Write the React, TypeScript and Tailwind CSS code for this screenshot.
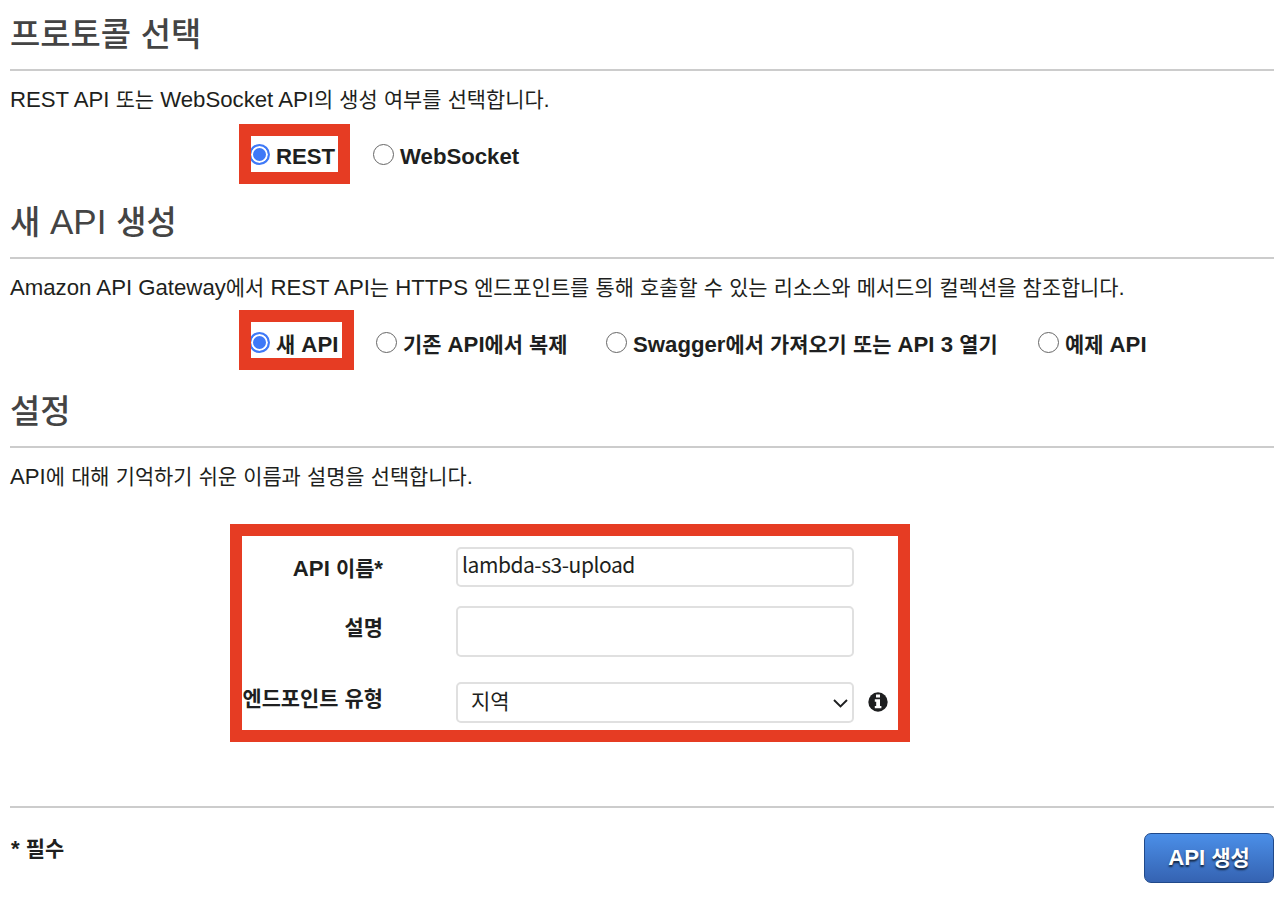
import type { ReactNode } from "react";

const HANGUL = /([가-힣]+)/;

export default function App() {
  return (
    <main className="relative h-[897px] w-[1280px] overflow-hidden bg-white pr-[6px] pl-[10px] font-['Liberation_Sans','Noto_Sans_CJK_KR',sans-serif] text-[22.2px] text-[#1e1f20]">
      <Section title="프로토콜 선택" description="REST API 또는 WebSocket API의 생성 여부를 선택합니다." height="h-[188px]">
        <div className="flex h-[58px] items-center pl-[239px]">
          <RadioOption name="protocol" label="REST" width="w-[124px]" checked />
          <RadioOption name="protocol" label="WebSocket" width="w-[150px]" />
        </div>
      </Section>

      <Section
        title="새 API 생성"
        description="Amazon API Gateway에서 REST API는 HTTPS 엔드포인트를 통해 호출할 수 있는 리소스와 메서드의 컬렉션을 참조합니다."
        height="h-[189px]"
      >
        <div className="flex h-[58px] items-center pl-[239px]">
          <RadioOption name="source" label="새 API" width="w-[127px]" checked />
          <RadioOption name="source" label="기존 API에서 복제" width="w-[230px]" />
          <RadioOption name="source" label="Swagger에서 가져오기 또는 API 3 열기" width="w-[432px]" />
          <RadioOption name="source" label="예제 API" width="w-[120px]" />
        </div>
      </Section>

      <Section title="설정" description="API에 대해 기억하기 쉬운 이름과 설명을 선택합니다." height="h-[429px]">
        <div className="flex flex-col pt-[42px]">
          <Field label="API 이름*" height="h-[59px]">
            <input
              defaultValue="lambda-s3-upload"
              className="h-10 w-[398px] rounded-[5px] border-2 border-[#e0e0e0] px-[4px] pb-[6px] font-['Noto_Sans_CJK_KR',sans-serif] text-[21px] tracking-[-0.45px] outline-none"
            />
          </Field>
          <Field label="설명" height="h-[76px]">
            <textarea className="h-[51px] w-[398px] resize-none rounded-[5px] border-2 border-[#e0e0e0] outline-none" />
          </Field>
          <Field label="엔드포인트 유형" height="h-[42px]" labelOffset="pt-0">
            <div className="relative h-[42px] w-[398px]">
              <select className="h-[41px] w-full appearance-none rounded-[5px] border-2 border-[#e0e0e0] bg-white px-[13px] pb-[3px] font-['Noto_Sans_CJK_KR',sans-serif] text-[21px] outline-none">
                <option>지역</option>
              </select>
              <svg className="pointer-events-none absolute top-[17px] right-[6px] h-[9px] w-[15px]" viewBox="0 0 15 9" fill="none">
                <path d="M1 1 7.5 7.4 14 1" stroke="currentColor" strokeWidth="1.9" />
              </svg>
            </div>
            <InfoIcon />
          </Field>
        </div>
      </Section>

      <footer className="flex justify-between border-t-2 border-[#cccccc] pt-[25px]">
        <span className="-mt-px pl-px font-bold">
          <Label>* 필수</Label>
        </span>
        <button className="h-[50px] w-[130px] rounded-[7px] border border-[#20498a] bg-linear-to-b from-[#4b8fe8] to-[#3563b2] font-bold text-white [text-shadow:0_2px_2px_rgba(0,0,0,0.7)]">
          <Label>API 생성</Label>
        </button>
      </footer>

      <Highlight className="top-[124px] left-[239px] h-[60px] w-[111px]" />
      <Highlight className="top-[310px] left-[239px] h-[60px] w-[115px]" />
      <Highlight className="top-[524px] left-[230px] h-[218px] w-[680px]" />
    </main>
  );
}

type SectionProps = {
  title: string;
  description: string;
  height: string;
  children: ReactNode;
};

function Section({ title, description, height, children }: SectionProps) {
  return (
    <section className={height}>
      <h2 className="h-[71px] border-b-2 border-[#cccccc] pt-[14px] text-[35px] leading-10 font-medium text-[#444]">
        <Label>{title}</Label>
      </h2>
      <p className="flex h-[57px] items-center whitespace-pre">
        <Label>{description}</Label>
      </p>
      {children}
    </section>
  );
}

// Hangul is set slightly smaller than the Latin text around it
function Label({ children }: { children: string }) {
  return (
    <span className="whitespace-pre">
      {children.split(HANGUL).map((part, i) =>
        HANGUL.test(part) ? (
          <span key={i} className="text-[0.94em] leading-none">
            {part}
          </span>
        ) : (
          part
        ),
      )}
    </span>
  );
}

type RadioOptionProps = {
  name: string;
  label: string;
  width: string;
  checked?: boolean;
};

function RadioOption({ name, label, width, checked }: RadioOptionProps) {
  return (
    <label className={`flex shrink-0 items-center gap-[6px] font-bold ${width}`}>
      <input
        type="radio"
        name={name}
        defaultChecked={checked}
        className="mb-[5px] size-[21px] shrink-0 appearance-none rounded-full border-[1.5px] border-[#666] bg-white checked:border-2 checked:border-[#3f79f7] checked:bg-[#3f79f7] checked:shadow-[inset_0_0_0_2px_white]"
      />
      <Label>{label}</Label>
    </label>
  );
}

type FieldProps = {
  label: string;
  height: string;
  labelOffset?: string;
  children: ReactNode;
};

function Field({ label, height, labelOffset = "pt-[5px]", children }: FieldProps) {
  return (
    <div className={`flex items-start ${height}`}>
      <div className={`mr-[73px] w-[373px] shrink-0 text-right font-bold ${labelOffset}`}>
        <Label>{label}</Label>
      </div>
      {children}
    </div>
  );
}

function InfoIcon() {
  return (
    <svg className="mt-[10px] ml-[14px] size-5" viewBox="0 0 20 20">
      <circle cx="10" cy="10" r="9.7" fill="currentColor" />
      <path d="M8 2.6h4v3H8zM6.8 7.3H12v6.6h1.4v2.4H6.8v-2.4h1.4V9.7H6.8z" fill="white" />
    </svg>
  );
}

function Highlight({ className }: { className: string }) {
  return <div className={`pointer-events-none absolute border-[12px] border-[#e63c23] ${className}`} />;
}
